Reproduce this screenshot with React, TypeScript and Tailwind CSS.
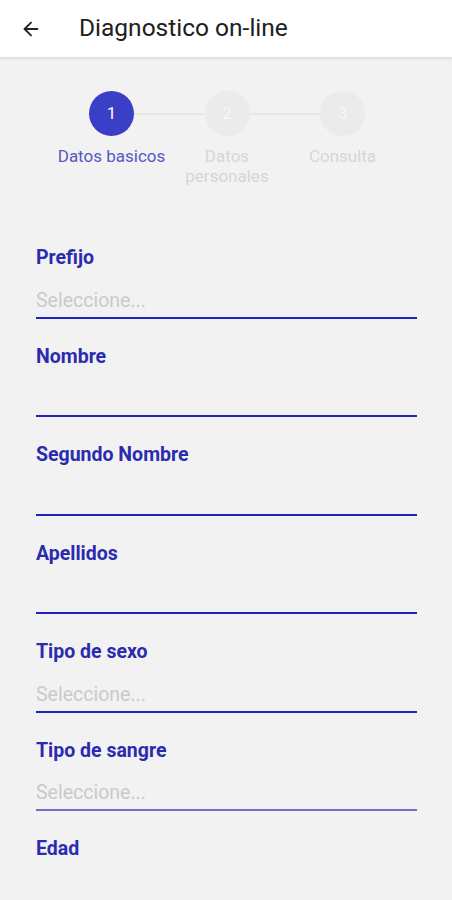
import { ArrowLeft } from 'lucide-react'

const steps = [
  { n: 1, label: 'Datos basicos', active: true },
  { n: 2, label: 'Datos personales', active: false },
  { n: 3, label: 'Consulta', active: false },
]

const fields = [
  { label: 'Prefijo', placeholder: 'Seleccione...' },
  { label: 'Nombre', placeholder: '' },
  { label: 'Segundo Nombre', placeholder: '' },
  { label: 'Apellidos', placeholder: '' },
  { label: 'Tipo de sexo', placeholder: 'Seleccione...' },
  { label: 'Tipo de sangre', placeholder: 'Seleccione...', faded: true },
]

export default function App() {
  return (
    <div className="w-[452px] h-[900px] overflow-hidden bg-[#f2f2f2] font-['Roboto',sans-serif]">
      {/* Toolbar */}
      <div className="h-[57px] bg-white flex items-center shadow-[0_1px_3px_rgba(0,0,0,0.15)] relative z-10">
        <ArrowLeft className="w-[22px] h-[22px] ml-[20px] text-[#222]" strokeWidth={2} />
        <span className="ml-[37px] text-[24.5px] text-[#202020] leading-none">Diagnostico on-line</span>
      </div>

      {/* Stepper */}
      <div className="grid grid-cols-[115px_116px_115px] ml-[54px] mt-[34px]">
        {steps.map((s, i) => (
          <div key={s.n} className="flex flex-col items-center">
            <div className="flex items-center w-full">
              <div className={`flex-1 h-[2px] ${i === 0 ? 'bg-transparent' : 'bg-[#e6e6e6]'}`} />
              <div
                className={`w-[45px] h-[45px] rounded-full flex items-center justify-center text-[16px] ${
                  s.active ? 'bg-[#3b3fc7] text-white' : 'bg-[#ebebeb] text-[#f7f7f7]'
                }`}
              >
                {s.n}
              </div>
              <div className={`flex-1 h-[2px] ${i === 2 ? 'bg-transparent' : 'bg-[#e6e6e6]'}`} />
            </div>
            <div
              className={`mt-[10px] text-[17px] leading-[20px] text-center px-[4px] ${
                s.active ? 'text-[#5558c4] whitespace-nowrap' : 'text-[#d6d6d6]'
              }`}
            >
              {s.label}
            </div>
          </div>
        ))}
      </div>

      {/* Form */}
      <div className="mt-[61px] pl-[36px] pr-[35px] flex flex-col gap-[27px]">
        {fields.map((f) => (
          <div key={f.label}>
            <div className="text-[19.5px] leading-[22px] font-bold text-[#2b2bb0]">{f.label}</div>
            <div
              className={`h-[49.5px] flex items-end pb-[5px] border-b-2 ${
                f.faded ? 'border-[#6f6fc9]' : 'border-[#2121bb]'
              }`}
            >
              <span className="text-[19.5px] leading-[22px] text-[#cacaca]">{f.placeholder}</span>
            </div>
          </div>
        ))}
        <div className="text-[19.5px] leading-[22px] font-bold text-[#2b2bb0]">Edad</div>
      </div>
    </div>
  )
}
